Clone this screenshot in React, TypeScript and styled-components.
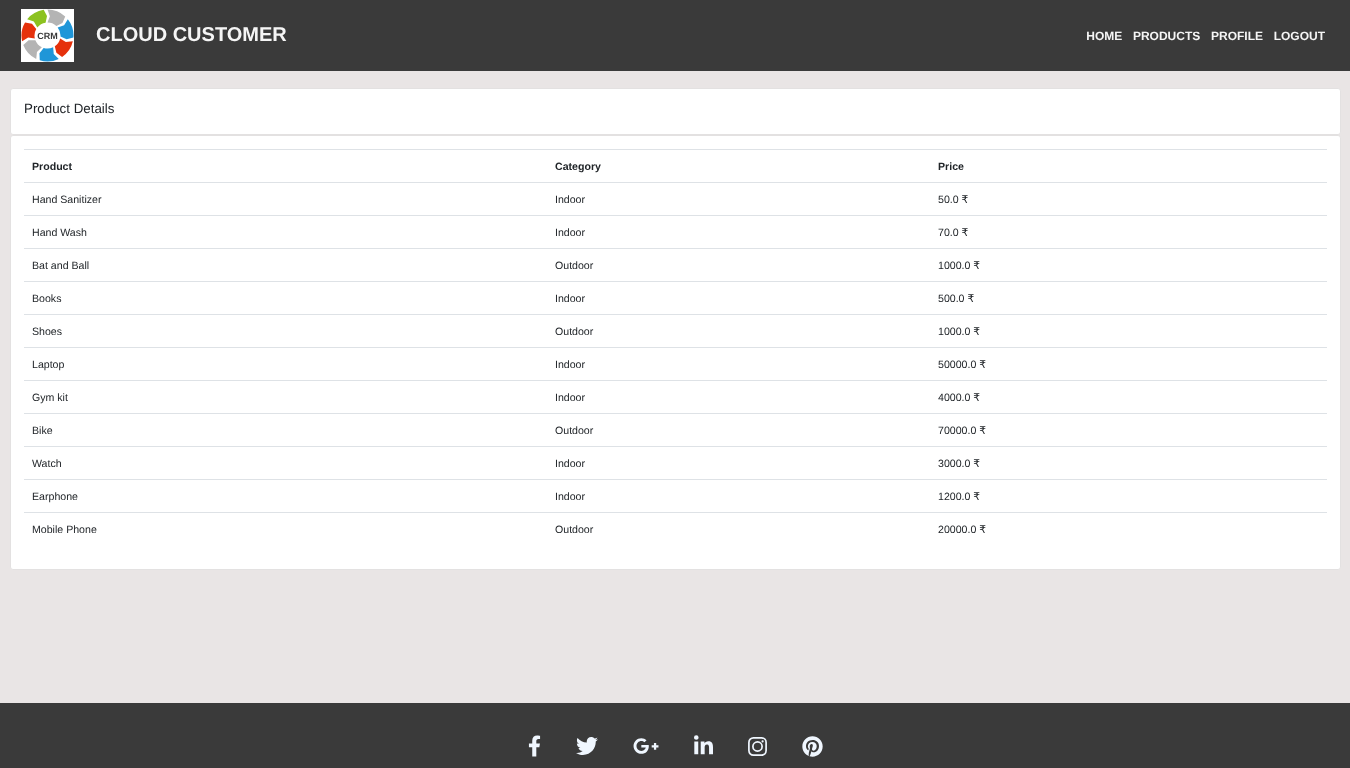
import React from 'react';
import styled, { createGlobalStyle } from 'styled-components';
import {
  FaFacebookF,
  FaTwitter,
  FaGooglePlusG,
  FaLinkedinIn,
  FaPinterest,
} from 'react-icons/fa';

const GlobalStyle = createGlobalStyle`
  html, body {
    margin: 0;
    padding: 0;
    background: #e9e5e5;
    font-family: "Liberation Sans", Arial, sans-serif;
    text-rendering: geometricPrecision;
    overflow: hidden;
  }
`;

const Page = styled.div`
  height: 768px;
  display: flex;
  flex-direction: column;
  will-change: transform;
`;

const Header = styled.header`
  height: 71px;
  background: #3a3a3a;
  display: flex;
  align-items: flex-start;
  justify-content: space-between;
  padding: 9px 25px 0 21px;
  box-sizing: border-box;
`;

const Brand = styled.div`
  display: flex;
  align-items: center;
  gap: 22px;
`;

const LogoBox = styled.div`
  width: 53px;
  height: 53px;
  background: #fff;
`;

const Title = styled.h1`
  margin: 0;
  color: #f5f5f5;
  font-size: 20px;
  font-weight: 700;
  line-height: 49px;
  padding-bottom: 1px;
`;

const Nav = styled.nav`
  display: flex;
  gap: 10.7px;
  padding-top: 20px;
`;

const NavLink = styled.a`
  color: #f5f5f5;
  font-size: 12px;
  font-weight: 700;
  line-height: 14px;
`;

const Main = styled.main`
  flex: 1;
  padding: 17px 9px 0 10px;
`;

const Card = styled.section`
  background: #fff;
  border: 1px solid #e3e1e1;
  border-radius: 3px;
`;

const CardTitle = styled.div`
  height: 45px;
  padding: 12px 13px 0;
  box-sizing: border-box;
  color: #212529;
  font-size: 13.33px;
  line-height: 16px;
`;

const TableCard = styled(Card)`
  padding: 13px 13px 23px 13px;
`;

const Table = styled.table`
  width: 100%;
  border-collapse: collapse;
  table-layout: fixed;
  color: #212529;
  font-size: 10.6px;
`;

const Col = styled.col<{ $width: number }>`
  width: ${(p) => p.$width}px;
`;

const Th = styled.th`
  height: 33px;
  padding: 2px 8px 0;
  box-sizing: border-box;
  border-top: 1px solid #dee2e6;
  text-align: left;
  font-weight: 700;
`;

const Td = styled.td`
  height: 33px;
  padding: 2px 8px 0;
  box-sizing: border-box;
  border-top: 1px solid #dee2e6;
`;

const Rupee = styled.span`
  font-family: "DejaVu Sans", sans-serif;
`;

const Footer = styled.footer`
  height: 65px;
  background: #3a3a3a;
  display: flex;
  justify-content: center;
  align-items: flex-start;
  padding-top: 31px;
  box-sizing: border-box;
`;

const Socials = styled.div`
  height: 24px;
  display: flex;
  align-items: center;
  gap: 35px;
  color: #f0f7ff;
`;

const SocialIcon = styled.span<{ $w: number; $h: number }>`
  display: block;
  width: ${(p) => p.$w}px;
  height: ${(p) => p.$h}px;

  svg {
    display: block;
    width: 100%;
    height: 100%;
  }
`;

const rows = [
  ['Hand Sanitizer', 'Indoor', '50.0'],
  ['Hand Wash', 'Indoor', '70.0'],
  ['Bat and Ball', 'Outdoor', '1000.0'],
  ['Books', 'Indoor', '500.0'],
  ['Shoes', 'Outdoor', '1000.0'],
  ['Laptop', 'Indoor', '50000.0'],
  ['Gym kit', 'Indoor', '4000.0'],
  ['Bike', 'Outdoor', '70000.0'],
  ['Watch', 'Indoor', '3000.0'],
  ['Earphone', 'Indoor', '1200.0'],
  ['Mobile Phone', 'Outdoor', '20000.0'],
];

const logoColors = ['#b4b4b4', '#1f96d8', '#e5310c', '#1f96d8', '#b4b4b4', '#e5310c', '#8cc220'];

// one arrow of the ring, going clockwise from angle a (0 = 12 o'clock)
const arrowPath = (a: number) => {
  const pt = (deg: number, r: number) => {
    const t = ((deg - 90) * Math.PI) / 180;
    return `${(26.5 + r * Math.cos(t)).toFixed(2)} ${(26.5 + r * Math.sin(t)).toFixed(2)}`;
  };
  const outer = 26;
  const inner = 13;
  const mid = 19.5;
  const len = 43;
  return [
    `M${pt(a, outer)}`,
    `A${outer} ${outer} 0 0 1 ${pt(a + len, outer)}`,
    `L${pt(a + len + 7, mid)}`,
    `L${pt(a + len, inner)}`,
    `A${inner} ${inner} 0 0 0 ${pt(a, inner)}`,
    `L${pt(a + 7, mid)}`,
    'Z',
  ].join(' ');
};

const Logo = () => (
  <LogoBox>
    <svg width="53" height="53" viewBox="0 0 53 53">
      {logoColors.map((c, i) => (
        <path key={i} d={arrowPath(i * (360 / 7))} fill={c} />
      ))}
      <text
        x="26.5"
        y="29.5"
        textAnchor="middle"
        fontFamily="Liberation Sans, sans-serif"
        fontSize="9"
        fontWeight="700"
        fill="#3a3a3a"
      >
        CRM
      </text>
    </svg>
  </LogoBox>
);

const InstagramIcon = () => (
  <svg viewBox="0 0 19 19" fill="none" stroke="currentColor" strokeWidth="1.7">
    <rect x="0.9" y="0.9" width="17.2" height="17.2" rx="4.5" />
    <circle cx="9.5" cy="9.5" r="4.6" />
    <circle cx="14.6" cy="4.4" r="1.1" fill="currentColor" stroke="none" />
  </svg>
);

export default function App() {
  return (
    <Page>
      <GlobalStyle />
      <Header>
        <Brand>
          <Logo />
          <Title>CLOUD CUSTOMER</Title>
        </Brand>
        <Nav>
          <NavLink>HOME</NavLink>
          <NavLink>PRODUCTS</NavLink>
          <NavLink>PROFILE</NavLink>
          <NavLink>LOGOUT</NavLink>
        </Nav>
      </Header>
      <Main>
        <Card>
          <CardTitle>Product Details</CardTitle>
        </Card>
        <TableCard>
          <Table>
            <colgroup>
              <Col $width={523} />
              <Col $width={383} />
              <Col $width={397} />
            </colgroup>
            <thead>
              <tr>
                <Th>Product</Th>
                <Th>Category</Th>
                <Th>Price</Th>
              </tr>
            </thead>
            <tbody>
              {rows.map((r) => (
                <tr key={r[0]}>
                  <Td>{r[0]}</Td>
                  <Td>{r[1]}</Td>
                  <Td>
                    {r[2]} <Rupee>₹</Rupee>
                  </Td>
                </tr>
              ))}
            </tbody>
          </Table>
        </TableCard>
      </Main>
      <Footer>
        <Socials>
          <SocialIcon $w={13} $h={22}>
            <FaFacebookF />
          </SocialIcon>
          <SocialIcon $w={22} $h={22}>
            <FaTwitter />
          </SocialIcon>
          <SocialIcon $w={26} $h={22}>
            <FaGooglePlusG />
          </SocialIcon>
          <SocialIcon $w={19} $h={22}>
            <FaLinkedinIn />
          </SocialIcon>
          <SocialIcon $w={19} $h={19}>
            <InstagramIcon />
          </SocialIcon>
          <SocialIcon $w={21} $h={21}>
            <FaPinterest />
          </SocialIcon>
        </Socials>
      </Footer>
    </Page>
  );
}
